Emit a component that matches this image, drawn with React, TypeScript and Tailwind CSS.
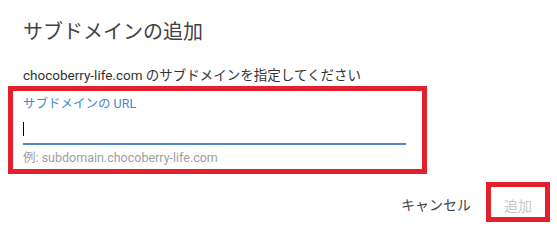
export default function App() {
  return (
    <div
      className="w-[557px] h-[241px] bg-white overflow-hidden flex flex-col"
      style={{ fontFamily: 'Roboto, "Noto Sans CJK JP", sans-serif' }}
    >
      <h2 className="mt-[18px] pl-[23px] text-[20px] leading-[28px] font-normal text-[#424242]">
        サブドメインの追加
      </h2>

      <p className="mt-[19px] pl-[23px] text-[13.5px] leading-[20px] text-[#333333]">
        chocoberry-life.com のサブドメインを指定してください
      </p>

      {/* highlighted input field */}
      <div className="mt-[1px] ml-[8px] w-[419px] h-[88px] border-[5px] border-[#e3202b] pl-[10px] pr-[16px] pt-[5px]">
        <label className="block text-[12.5px] leading-[16px] font-normal text-[#4a86c8]">
          サブドメインの URL
        </label>
        <div className="h-[31px] flex items-end pb-[7px]">
          <span className="w-[1px] h-[14px] bg-black" />
        </div>
        <div className="h-[2px] bg-[#4f86c7]" />
        <p className="mt-[5px] text-[12.5px] leading-[16px] text-[#9e9e9e]">
          例: subdomain.chocoberry-life.com
        </p>
      </div>

      <div className="mt-[8px] flex justify-end items-start pr-[7px]">
        <button className="mt-[13px] mr-[15px] text-[14px] leading-[20px] text-[#444444]">
          キャンセル
        </button>
        <div className="w-[64px] h-[40px] border-[5px] border-[#e3202b] flex justify-center pt-[8px]">
          <button className="text-[14px] leading-[20px] text-[#c8c8c8]">追加</button>
        </div>
      </div>
    </div>
  );
}
